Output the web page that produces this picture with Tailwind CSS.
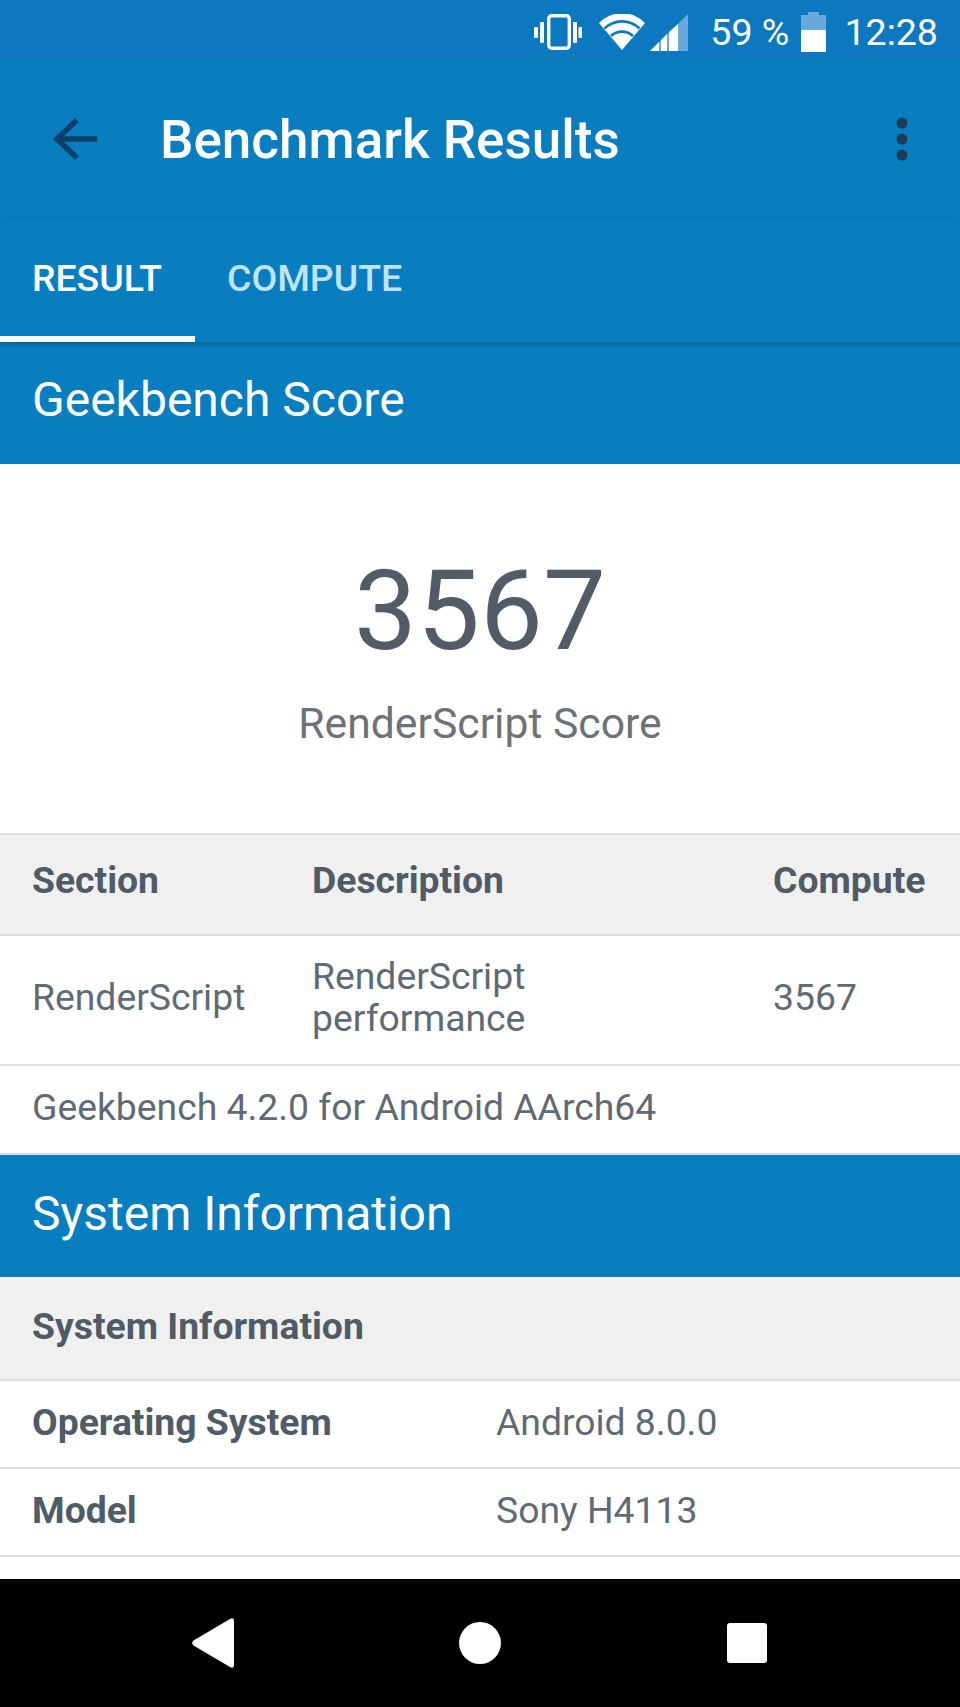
<!DOCTYPE html>
<html lang="en">
<head>
<meta charset="UTF-8">
<title>Benchmark Results</title>
<script src="https://cdn.jsdelivr.net/npm/@tailwindcss/browser@4"></script>
</head>
<body class="bg-white font-['Roboto',sans-serif] w-[960px] h-[1707px] overflow-hidden flex flex-col">
  <!-- Status bar -->
  <div class="h-[60px] shrink-0 bg-[#0c78bf] flex items-center justify-end text-white text-[37.6px] pr-[22px] pt-[5px]">
    <svg class="w-[48px] h-[36px] mr-[17px] mt-[-1px]" viewBox="0 0 48 36" fill="white">
      <rect x="0" y="13" width="4" height="11" rx="1"/><rect x="6" y="8" width="4" height="21" rx="1"/>
      <rect x="14.7" y="1.7" width="20.6" height="32.6" rx="3" fill="none" stroke="white" stroke-width="3.4"/>
      <rect x="39" y="8" width="4" height="21" rx="1"/><rect x="44.5" y="13" width="3.5" height="11" rx="1"/>
    </svg>
    <svg class="w-[46px] h-[36px] mr-[5px] mt-[-1px]" viewBox="0 0 46 36" fill="none">
      <path d="M0 9 A32 32 0 0 1 46 9 L23 36 Z" fill="white"/>
      <path d="M5.5 14.5 A25 25 0 0 1 40.5 14.5" stroke="#0c78bf" stroke-width="2.6"/>
      <path d="M12 22 A16 16 0 0 1 34 22" stroke="#0c78bf" stroke-width="2.6"/>
    </svg>
    <svg class="w-[38px] h-[37px] mr-[22px] mt-[-1px]" viewBox="0 0 38 37">
      <path d="M0 37 L38 0 V37 Z" fill="#6aa9dc"/>
      <path d="M0 37 L9 28 V37 Z M11 26 L17 20 V37 H11 Z M19 18 L28 10 V37 H19 Z" fill="white"/>
    </svg>
    <span class="leading-none">59 %</span>
    <svg class="w-[25px] h-[40px] ml-[12px] mr-[18px] mt-[-1px]" viewBox="0 0 25 40">
      <path d="M0 3 H7 V0 H18 V3 H25 V40 H0 Z" fill="#6aa9dc"/>
      <rect x="0" y="18" width="25" height="22" fill="white"/>
    </svg>
    <span class="leading-none">12:28</span>
  </div>

  <!-- Toolbar -->
  <div class="h-[158px] shrink-0 bg-[#087dbf] flex items-center">
    <svg class="w-[44px] h-[42px] ml-[53px]" viewBox="0 0 44 42" fill="none" stroke="#0b4169" stroke-width="5.5">
      <path d="M44 21 H4 M24 2 L4 21 L24 40"/>
    </svg>
    <span class="ml-[63px] pt-[2px] text-white text-[53px] font-medium leading-none">Benchmark Results</span>
    <svg class="w-[12px] h-[44px] ml-auto mr-[52px]" viewBox="0 0 12 44" fill="#1b3a5c">
      <circle cx="6" cy="6" r="5.5"/><circle cx="6" cy="22" r="5.5"/><circle cx="6" cy="38" r="5.5"/>
    </svg>
  </div>

  <!-- Tabs -->
  <div class="h-[124px] shrink-0 bg-[#087dbf] flex text-[37.4px] font-medium relative z-10 shadow-[0_2px_4px_rgba(0,0,0,0.25)]">
    <div class="w-[195px] pt-[3px] pr-[1px] border-b-[6px] border-white text-white flex items-center justify-center">RESULT</div>
    <div class="ml-[32px] pt-[3px] border-b-[6px] border-transparent text-[#bfe3f7] flex items-center">COMPUTE</div>
  </div>

  <!-- Geekbench Score -->
  <div class="h-[122px] shrink-0 bg-[#087dbf] text-white text-[48px] flex items-center pl-[32px] pb-[6px]">Geekbench Score</div>
  <div class="h-[369px] shrink-0 flex flex-col items-center">
    <div class="text-[#525c68] text-[112px] leading-none mt-[91px]">3567</div>
    <div class="text-[#6d7276] text-[42.7px] leading-none mt-[35px]">RenderScript Score</div>
  </div>

  <!-- Score table -->
  <div class="h-[103px] shrink-0 bg-[#f0f0f0] border-y-2 border-[#dedede] flex items-center text-[#4f5b67] text-[37.3px] font-bold pb-[8px]">
    <div class="w-[312px] pl-[32px]">Section</div>
    <div class="w-[461px]">Description</div>
    <div>Compute</div>
  </div>
  <div class="h-[130px] shrink-0 border-b-2 border-[#dedede] flex items-center text-[#5f6a74] text-[37.3px] leading-[42px] pb-[6px]">
    <div class="w-[312px] pl-[32px]">RenderScript</div>
    <div class="w-[461px]">RenderScript<br>performance</div>
    <div>3567</div>
  </div>
  <div class="h-[89px] shrink-0 border-b-2 border-[#dedede] flex items-center pl-[32px] text-[#5f6a74] text-[37.3px] pb-[3px]">Geekbench 4.2.0 for Android AArch64</div>

  <!-- System Information -->
  <div class="h-[122px] shrink-0 bg-[#087dbf] text-white text-[48px] flex items-center pl-[32px] pb-[4px]">System Information</div>
  <div class="h-[104px] shrink-0 bg-[#f0f0f0] border-b-2 border-[#dedede] flex items-center pl-[32px] text-[#4f5b67] text-[37.3px] font-bold pb-[3px]">System Information</div>
  <div class="h-[88px] shrink-0 border-b-2 border-[#dedede] flex items-center text-[37.3px] pb-[2px]">
    <div class="w-[496px] pl-[32px] text-[#4f5b67] font-bold">Operating System</div>
    <div class="text-[#5f6a74]">Android 8.0.0</div>
  </div>
  <div class="h-[88px] shrink-0 border-b-2 border-[#dedede] flex items-center text-[37.3px] pb-[2px]">
    <div class="w-[496px] pl-[32px] text-[#4f5b67] font-bold">Model</div>
    <div class="text-[#5f6a74]">Sony H4113</div>
  </div>
  <div class="flex-1"></div>

  <!-- Nav bar -->
  <div class="h-[128px] bg-black flex items-center shrink-0">
    <svg class="w-[42px] h-[50px] ml-[192px]" viewBox="0 0 42 50" fill="white">
      <path d="M1.5 22.5 L38 1 Q42 -1 42 3 V47 Q42 51 38 49 L1.5 27.5 Q-1 25 1.5 22.5 Z"/>
    </svg>
    <div class="w-[42px] h-[42px] rounded-full bg-white ml-[225px]"></div>
    <div class="w-[40px] h-[40px] rounded-[3px] bg-white ml-[226px]"></div>
  </div>
</body>
</html>
